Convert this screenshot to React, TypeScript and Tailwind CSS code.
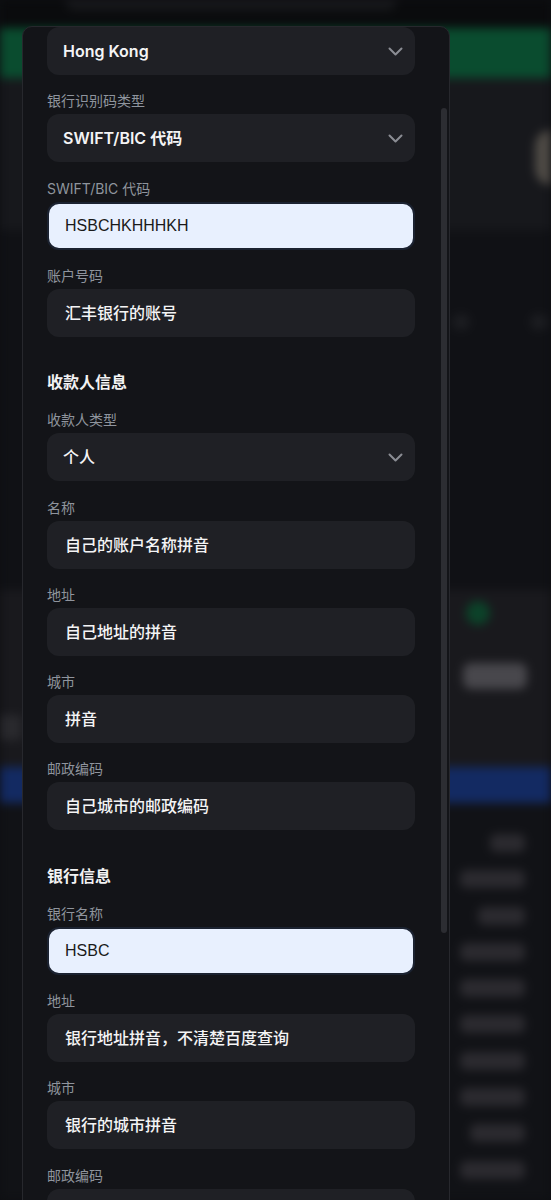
import type { ReactNode } from 'react'

const pillWidths = [35, 65, 47, 65, 65, 65, 65, 65, 55, 65]

function Chevron() {
  return (
    <svg width="15" height="9" viewBox="0 0 15 9" fill="none" className="shrink-0">
      <path d="M1.5 1.5l6 6 6-6" stroke="#8b8d94" strokeWidth="2" strokeLinecap="round" strokeLinejoin="round" />
    </svg>
  )
}

function Select({ value, bold }: { value: string; bold?: boolean }) {
  return (
    <div
      className={`flex h-12 shrink-0 items-center justify-between rounded-xl bg-[#1f2025] pl-4 pr-3 text-base text-[#f4f4f5] ${
        bold ? 'font-semibold' : 'font-medium'
      }`}
    >
      <span>{value}</span>
      <Chevron />
    </div>
  )
}

function Input({ value, filled }: { value: string; filled?: boolean }) {
  if (filled) {
    return (
      <div className="flex h-12 items-center rounded-xl border-2 border-[#1b2230] bg-[#e8f0fe] px-4 font-['Liberation_Sans',sans-serif] text-base text-[#1a1a1a]">
        {value}
      </div>
    )
  }
  return (
    <div className="flex h-12 items-center rounded-xl bg-[#1f2025] px-[18px] text-base font-medium text-[#f4f4f5]">
      {value}
    </div>
  )
}

function Field({ label, children }: { label: string; children: ReactNode }) {
  return (
    <div className="shrink-0">
      <p className="mb-[3px] text-sm leading-5 text-[#8f949d]">{label}</p>
      {children}
    </div>
  )
}

function Heading({ children }: { children: ReactNode }) {
  return <h3 className="mt-[17px] shrink-0 text-base font-semibold leading-6 text-[#f2f2f3]">{children}</h3>
}

function Backdrop() {
  return (
    <div className="flex h-[1200px] flex-col blur-[5px]">
      <div className="h-[28px] bg-[#0a0b0d] pl-[65px]">
        <div className="h-[10px] w-[332px] rounded-b-xl bg-[#18191c]" />
      </div>
      <div className="h-[50px] bg-[#0a4c2f]" />
      <div className="flex h-[152px] justify-end bg-[#17181c]">
        <div className="mt-[52px] h-[55px] w-[16px] rounded-l-full bg-[#4f4b46]" />
      </div>
      <div className="flex h-[360px] bg-[#101115]">
        <div className="ml-[452px] mt-[84px] h-[16px] w-[18px] rounded-full bg-[#1c1d21]" />
        <div className="ml-[60px] mt-[84px] h-[16px] w-[18px] rounded-full bg-[#1c1d21]" />
      </div>
      <div className="flex h-[177px] bg-[#19191d]">
        <div className="w-[22px] pt-[125px]">
          <div className="h-[25px] rounded-r bg-[#29292d]" />
        </div>
        <div className="ml-[441px] flex flex-col">
          <div className="ml-[3px] mt-[11px] h-6 w-6 rounded-full bg-[#0c4229]" />
          <div className="mt-[38px] h-[26px] w-16 rounded-lg bg-[#48474c]" />
        </div>
      </div>
      <div className="h-[36px] bg-[#132a62]" />
      <div className="flex flex-1 flex-col items-end gap-[18.3px] bg-[#111216] pr-[26px] pt-[31px]">
        {pillWidths.map((w, i) => (
          <div key={i} className="h-[18px] rounded-md bg-[#2b2a2f]" style={{ width: w }} />
        ))}
      </div>
    </div>
  )
}

export default function App() {
  return (
    <div className="relative h-[1200px] w-[551px] overflow-hidden bg-[#0e0f12] font-['Inter','Noto_Sans_CJK_SC',sans-serif]">
      <Backdrop />

      <div className="absolute left-[22px] top-[26px] flex h-[1200px] w-[428px] overflow-hidden rounded-t-[10px] border border-[#27282d] bg-[#131418]">
        <div className="flex w-[392px] shrink-0 flex-col gap-[16.25px] pl-6">
          <Select value="Hong Kong" bold />
          <Field label="银行识别码类型">
            <Select value="SWIFT/BIC 代码" bold />
          </Field>
          <Field label="SWIFT/BIC 代码">
            <Input value="HSBCHKHHHKH" filled />
          </Field>
          <Field label="账户号码">
            <Input value="汇丰银行的账号" />
          </Field>

          <Heading>收款人信息</Heading>
          <Field label="收款人类型">
            <Select value="个人" />
          </Field>
          <Field label="名称">
            <Input value="自己的账户名称拼音" />
          </Field>
          <Field label="地址">
            <Input value="自己地址的拼音" />
          </Field>
          <Field label="城市">
            <Input value="拼音" />
          </Field>
          <Field label="邮政编码">
            <Input value="自己城市的邮政编码" />
          </Field>

          <Heading>银行信息</Heading>
          <Field label="银行名称">
            <Input value="HSBC" filled />
          </Field>
          <Field label="地址">
            <Input value="银行地址拼音，不清楚百度查询" />
          </Field>
          <Field label="城市">
            <Input value="银行的城市拼音" />
          </Field>
          <Field label="邮政编码">
            <Input value="银行的邮政编码" />
          </Field>
        </div>

        <div className="ml-[26px] w-[6px] shrink-0">
          <div className="mt-[81px] h-[825px] rounded-full bg-[#2c2d32]" />
        </div>
      </div>
    </div>
  )
}
